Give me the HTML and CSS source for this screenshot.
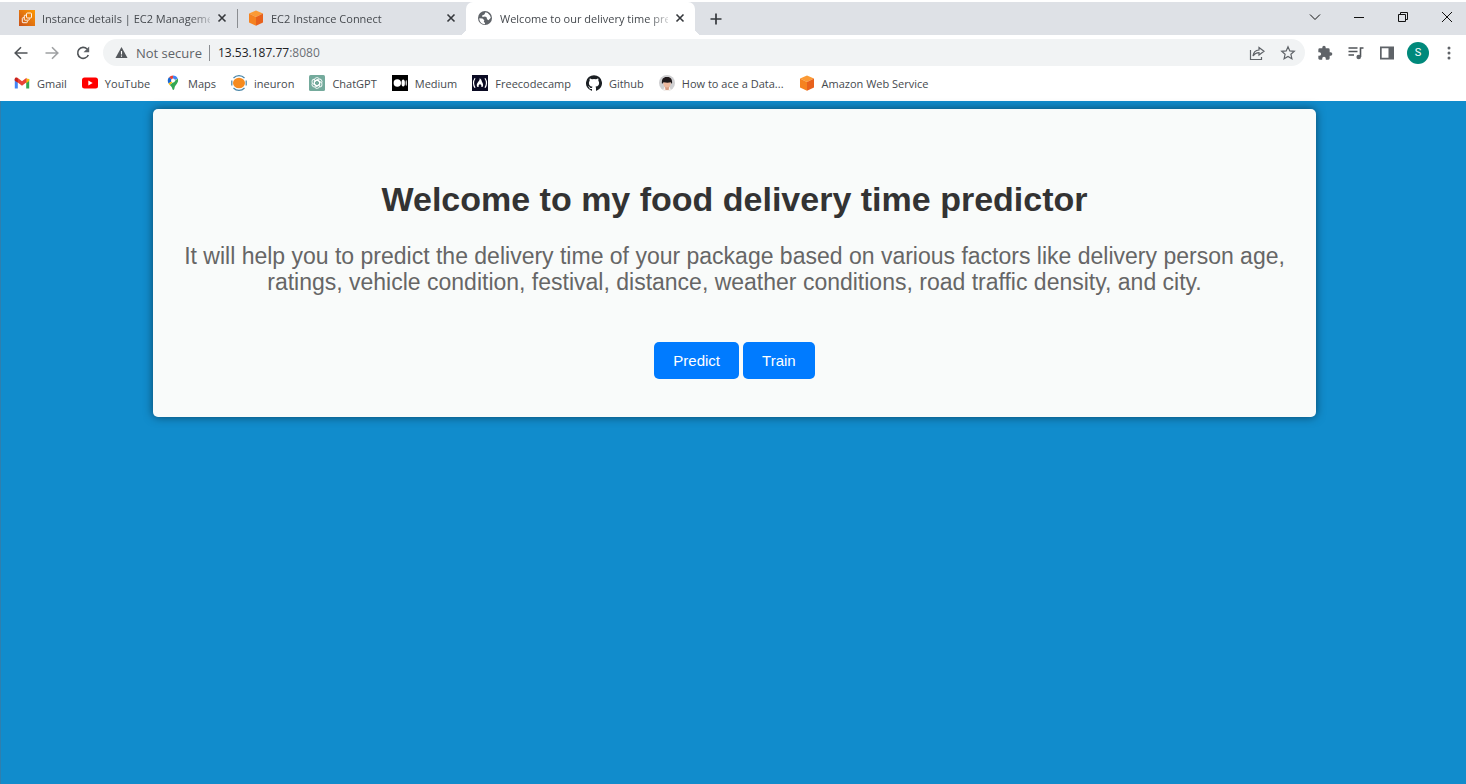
FILE: index.html
```html
<!DOCTYPE html>
<html lang="en">
<head>
<meta charset="utf-8">
<title>Welcome to our delivery time prediction</title>
<link rel="stylesheet" href="styles.css">
</head>
<body>
<svg class="defs" aria-hidden="true">
  <defs>
    <linearGradient id="orange" x1="0" y1="1" x2="1" y2="0"><stop offset="0" stop-color="#c8511b"/><stop offset="1" stop-color="#ff9900"/></linearGradient>
    <symbol id="close" viewBox="0 0 10 10"><path d="M1.5 1.5l7 7M8.500 1.500l-7 7" fill="none" stroke="#35383c" stroke-width="1.600"/></symbol>
    <symbol id="cube" viewBox="0 0 16 16"><path d="M8 0.500L15 3.500 8 7 1 3.500z" fill="#fb9a35"/><path d="M1 3.500L8 7v8.700L1 12.500z" fill="#f58220"/><path d="M15 3.500L8 7v8.700l7-3.200z" fill="#e8611c"/></symbol>
  </defs>
</svg>
<header class="browser">
  <div class="tabstrip">
    <div class="tab">
      <svg class="icon" viewBox="0 0 16 16"><rect width="16" height="16" fill="url(#orange)"/><g fill="none" stroke="#fff" stroke-width=".9"><rect x="7.500" y="3" width="5" height="5" rx="1"/><path d="M7 5.200H6a.7.700 0 0 0-.7.700V9.500a.7.700 0 0 0 .7.700h3.600a.7.700 0 0 0 .7-.7V8.500M5 7.700H4a.7.700 0 0 0-.7.700V12a.7.700 0 0 0 .7.700h3.600a.7.700 0 0 0 .7-.7v-1"/></g></svg>
      <span class="tab-title">Instance details | EC2 Manageme</span>
      <button class="tab-close" aria-label="Close tab"><svg><use href="#close"/></svg></button>
    </div>
    <div class="tab divided">
      <svg class="icon"><use href="#cube"/></svg>
      <span class="tab-title">EC2 Instance Connect</span>
      <button class="tab-close" aria-label="Close tab"><svg><use href="#close"/></svg></button>
    </div>
    <div class="tab active">
      <svg class="icon" viewBox="0 0 16 16"><circle cx="8" cy="8" r="7" fill="#5f6368"/><path d="M2.300 8.200l3.200.3 1.800 1.700-.5 1.500 1.200 1.200v1.300C4.500 14 2.200 11.500 2.300 8.200zM8.500 2.300l2.200.6 2.300 2.500.8 2.400-2.300 2.500-1.700-1.200.2-1.300-1.900-1.200-2.700.3-.3-1.500 2.200-.9z" fill="#fff"/></svg>
      <span class="tab-title">Welcome to our delivery time pre</span>
      <button class="tab-close" aria-label="Close tab"><svg><use href="#close"/></svg></button>
    </div>
    <button class="new-tab" aria-label="New tab"><svg viewBox="0 0 12 12"><path d="M6 .5v11M.5 6h11" stroke="#35383c" stroke-width="1.700"/></svg></button>
    <div class="window-controls">
      <button aria-label="Search tabs"><svg viewBox="0 0 12 12"><path d="M1 3.500l5 5 5-5"/></svg></button>
      <button aria-label="Minimize"><svg viewBox="0 0 12 12"><path d="M1 6.500h10"/></svg></button>
      <button aria-label="Restore"><svg viewBox="0 0 12 12"><path d="M1.500 3.500h7v7h-7zM3.500 3V1.500h7v7H9"/></svg></button>
      <button aria-label="Close window"><svg viewBox="0 0 12 12"><path d="M1 1l10 10M11 1L1 11"/></svg></button>
    </div>
  </div>
  <div class="toolbar">
    <button class="tool" aria-label="Back"><svg viewBox="0 0 16 16"><path class="line" d="M14.500 8H2.500M8 2.200L2.200 8 8 13.800"/></svg></button>
    <button class="tool dim" aria-label="Forward"><svg viewBox="0 0 16 16"><path class="line" d="M1.500 8h12M8 2.200L13.800 8 8 13.800"/></svg></button>
    <button class="tool" aria-label="Reload"><svg viewBox="0 0 16 16"><path class="line" d="M13.300 10a5.500 5.500 0 1 1-1.200-6"/><path d="M14.200 1.500v5.700H8.500z"/></svg></button>
    <div class="omnibox">
      <svg class="warn" viewBox="0 0 14 14"><path d="M7 1l6.500 12H.5z" fill="#55595d"/><path d="M6.400 5.500h1.200v3.700H6.400zM6.400 10.200h1.200v1.300H6.400z" fill="#fff"/></svg>
      <span class="security">Not secure</span>
      <span class="url">13.53.187.77<span class="port">:8080</span></span>
      <button class="tool" aria-label="Share"><svg viewBox="0 0 16 16"><path class="thin" d="M1.500 5v9.500h11V12M4 11c.5-4 2.600-5.800 6-6V2.500L15 6.300 10 10V7.700C7.500 7.700 5.500 8.800 4 11z"/></svg></button>
      <button class="tool" aria-label="Bookmark"><svg viewBox="0 0 16 16"><path class="thin" d="M8 1.800l1.800 4.100 4.500.4-3.400 3 1 4.400L8 11.400l-3.900 2.300 1-4.400-3.400-3 4.500-.4z"/></svg></button>
    </div>
    <button class="tool" aria-label="Extensions"><svg viewBox="0 0 24 24"><path d="M20.500 11H19V7a2 2 0 0 0-2-2h-4V3.500a2.500 2.500 0 0 0-5 0V5H4a2 2 0 0 0-2 2v3.800h1.500a2.700 2.700 0 0 1 0 5.400H2V20c0 1.100.9 2 2 2h3.800v-1.500a2.700 2.700 0 0 1 5.400 0V22H17a2 2 0 0 0 2-2v-4h1.500a2.500 2.500 0 0 0 0-5z"/></svg></button>
    <button class="tool" aria-label="Media"><svg viewBox="0 0 16 16"><path class="line" d="M.5 3h9M.5 6.500h9M.5 10H6M15.500 3h-3v9"/><circle cx="10.700" cy="12" r="2.300"/></svg></button>
    <button class="tool" aria-label="Side panel"><svg viewBox="0 0 16 16"><path fill-rule="evenodd" d="M1 1.500h14v13H1zM2.700 3.200v9.600h6.800V3.200z"/></svg></button>
    <button class="tool avatar" aria-label="Profile">S</button>
    <button class="tool" aria-label="Menu"><svg viewBox="0 0 16 16"><circle cx="8" cy="3" r="1.500"/><circle cx="8" cy="8" r="1.500"/><circle cx="8" cy="13" r="1.500"/></svg></button>
  </div>
  <nav class="bookmarks">
    <a href="#"><svg class="icon" viewBox="0 0 16 16"><path d="M.8 4v9.500h3V7z" fill="#4285f4"/><path d="M15.200 4v9.500h-3V7z" fill="#34a853"/><path d="M12.200 3.500L15.200 4v2l-3 2.300z" fill="#fbbc04"/><path d="M.8 4c0-1.600 1.600-2 2.700-1.200L8 6.300l4.500-3.500v4.500L8 10.700 3.800 7.500.8 5.500z" fill="#ea4335"/><path d="M.8 4.200c0-1.500 1.500-2 3-.8v4.200L.8 5.700z" fill="#c5221f"/></svg>Gmail</a>
    <a href="#"><svg class="icon" viewBox="0 0 16 16"><rect y="2.500" width="16" height="11" rx="2.500" fill="#f00"/><path d="M6.300 5.500v5L10.700 8z" fill="#fff"/></svg>YouTube</a>
    <a href="#"><svg class="icon" viewBox="0 0 16 16"><path d="M8 .5a5.300 5.300 0 0 0-4 1.800L8 6z" fill="#ea4335"/><path d="M8 .5a5.300 5.300 0 0 1 4.800 3L8 6z" fill="#4285f4"/><path d="M4 2.300C2.300 4.300 2.500 6.600 3.500 8.500L8 5.500z" fill="#1967d2"/><path d="M3.500 8.500l1.300 1.800L10.500 4z" fill="#fbbc04"/><path d="M12.800 3.500c1.500 4.500-2.800 6-3.300 9.500-.3 2.500-2 2.500-2.400 0-.3-1.200-1.300-2-2.300-3z" fill="#34a853"/><circle cx="8" cy="5.500" r="1.900" fill="#fff"/></svg>Maps</a>
    <a href="#"><svg class="icon" viewBox="0 0 16 16"><ellipse cx="8" cy="8" rx="6" ry="5.300" fill="#f68b1f"/><path d="M2.500 3C5.500-.2 10.500-.2 13.500 3M2.500 13c3 3.200 8 3.200 11 0M.8 5.500v5M15.200 5.500v5" fill="none" stroke="#4a86a8" stroke-width="1.200"/></svg>ineuron</a>
    <a href="#"><svg class="icon" viewBox="0 0 16 16"><rect width="16" height="16" rx="1.500" fill="#74aa9c"/><g fill="none" stroke="#fff" stroke-width=".9"><path id="petal" d="M5.400 9.500V5.200a2.600 2.600 0 0 1 4.800-1.400M5.400 6.500L8 5l3 1.700"/><use href="#petal" transform="rotate(60 8 8)"/><use href="#petal" transform="rotate(120 8 8)"/><use href="#petal" transform="rotate(180 8 8)"/><use href="#petal" transform="rotate(240 8 8)"/><use href="#petal" transform="rotate(300 8 8)"/></g></svg>ChatGPT</a>
    <a href="#"><svg class="icon" viewBox="0 0 16 16"><rect width="16" height="16" fill="#000"/><circle cx="5.300" cy="8" r="3.700" fill="#fff"/><ellipse cx="11.200" cy="8" rx="1.700" ry="3.500" fill="#fff"/><ellipse cx="14.200" cy="8" rx=".6" ry="3" fill="#fff"/></svg>Medium</a>
    <a href="#"><svg class="icon" viewBox="0 0 16 16"><rect width="16" height="16" fill="#0a0a23"/><path d="M3 3.200Q0 8 3 12.800M13 3.200q3 4.800 0 9.600" fill="none" stroke="#fff" stroke-width="1.200"/><path d="M7.600 3.200c1.900 1 2 2.500 2.600 4 .7 1.400 1.600 3 .3 4.800H9.300c.4-1.300-.2-2.400-1.300-2.700-1.100.3-1.700 1.400-1.300 2.700H5.500C3.800 9.700 5.500 8 6.500 6.500 7.300 5.400 7.800 4.500 7.600 3.200z" fill="#fff"/></svg>Freecodecamp</a>
    <a href="#"><svg class="icon" viewBox="0 0 16 16"><path fill="#1b1f23" d="M8 .2a8 8 0 0 0-2.530 15.590c.4.070.55-.17.550-.38l-.01-1.490c-2.230.48-2.700-.95-2.700-.95-.36-.92-.89-1.170-.89-1.170-.73-.5.060-.49.060-.49.800.06 1.230.83 1.230.83.710 1.220 1.870.87 2.330.66.070-.52.280-.87.510-1.070-1.780-.2-3.640-.89-3.640-3.950 0-.87.310-1.590.82-2.150-.08-.2-.36-1.020.08-2.120 0 0 .67-.21 2.200.82a7.600 7.600 0 0 1 4 0c1.530-1.040 2.200-.82 2.200-.82.440 1.100.160 1.920.080 2.120.51.560.82 1.270.82 2.150 0 3.070-1.870 3.750-3.650 3.950.290.250.540.730.540 1.480l-.01 2.200c0 .210.150.460.550.380A8 8 0 0 0 8 .2z"/></svg>Github</a>
    <a href="#"><svg class="icon" viewBox="0 0 16 16"><circle cx="8" cy="8" r="8" fill="#cfcfd1"/><path d="M4 15l1.500-3h5l1.500 3a8 8 0 0 1-8 0z" fill="#f7f2ee"/><path d="M5.700 10h4.600l-.6 5H6.500z" fill="#d99b80"/><ellipse cx="8" cy="8.500" rx="3.600" ry="4" fill="#edb99f"/><path d="M3 9C2.200 3.500 5 1.700 8 2c3.500-.2 5.700 2 5 7L11.700 7.200 8.500 7.700 4.500 7.200z" fill="#20191b"/></svg>How to ace a Data...</a>
    <a href="#"><svg class="icon"><use href="#cube"/></svg>Amazon Web Service</a>
  </nav>
</header>
<main class="page">
  <section class="card">
    <h1>Welcome to my food delivery time predictor</h1>
    <p>It will help you to predict the delivery time of your package based on various factors like delivery person age, ratings, vehicle condition, festival, distance, weather conditions, road traffic density, and city.</p>
    <div class="actions"><button>Predict</button><button>Train</button></div>
  </section>
</main>
</body>
</html>
```
FILE: styles.css
```css
* { box-sizing: border-box; }
body {
  margin: 0;
  min-height: 100vh;
  display: flex;
  flex-direction: column;
  font-family: "Open Sans", "Noto Sans", sans-serif;
  background: #fff;
}
button { border: 0; padding: 0; background: none; font: inherit; }
svg { display: block; }
.defs { position: absolute; width: 0; height: 0; }
.icon { width: 16px; height: 16px; flex: none; }

.browser { padding-top: 2px; color: #45494e; font-size: 11px; }
.tabstrip {
  display: flex;
  align-items: stretch;
  height: 33px;
  padding-left: 8px;
  background: #dee1e6;
}
.tab {
  position: relative;
  display: flex;
  align-items: center;
  gap: 7px;
  width: 229px;
  padding: 0 10px 1px 11px;
}
.tab.divided::before {
  content: "";
  position: absolute;
  left: 0;
  top: 7px;
  height: 19px;
  width: 1px;
  background: #8a8d91;
}
.tab.active { background: #fff; border-radius: 7px 7px 0 0; }
.tab.active::before, .tab.active::after {
  content: "";
  position: absolute;
  bottom: 0;
  width: 7px;
  height: 7px;
}
.tab.active::before { right: 100%; background: radial-gradient(circle at 0 0, transparent 7px, #fff 7px); }
.tab.active::after { left: 100%; background: radial-gradient(circle at 100% 0, transparent 7px, #fff 7px); }
.tab-title {
  flex: 1;
  min-width: 0;
  white-space: nowrap;
  mask-image: linear-gradient(to right, #000 88%, transparent 104%);
}
.tab-close svg { width: 10px; height: 10px; }
.new-tab { margin-left: 15px; }
.new-tab svg { width: 12px; height: 12px; }
.window-controls { display: flex; gap: 6px; margin-left: auto; padding-bottom: 4px; }
.window-controls button { width: 38px; display: grid; place-items: center; }
.window-controls svg { width: 12px; height: 12px; fill: none; stroke: #111; }

.toolbar {
  display: flex;
  align-items: center;
  gap: 9px;
  height: 35px;
  padding: 0 6px 0 10px;
}
.tool { width: 22px; height: 22px; display: grid; place-items: center; flex: none; }
.tool svg { width: 16px; height: 16px; fill: #5f6368; }
.tool .line { fill: none; stroke: #505458; stroke-width: 1.6; }
.tool .thin { fill: none; stroke: #5f6368; stroke-width: 1.2; }
.tool.dim { opacity: .55; }
.tool.avatar {
  border-radius: 50%;
  background: #00897b;
  color: #fff;
  font: 11px Roboto, sans-serif;
}
.omnibox {
  flex: 1;
  display: flex;
  align-items: center;
  gap: 8px;
  height: 27px;
  padding: 0 6px 0 12px;
  border-radius: 14px;
  background: #f1f3f4;
  font-size: 13px;
}
.omnibox .tool + .tool { margin-left: 1px; }
.warn { width: 13px; height: 13px; }
.security { padding-right: 7px; border-right: 1px solid #8a8d91; line-height: 16px; color: #5f6368; }
.url { flex: 1; color: #202124; font-size: 12px; }
.port { color: #6b6f74; }

.bookmarks { display: flex; align-items: center; gap: 15px; height: 31px; padding: 0 14px 5px; }
.bookmarks a {
  display: flex;
  align-items: center;
  gap: 7px;
  color: #45494e;
  text-decoration: none;
  white-space: nowrap;
}

.page {
  flex: 1;
  padding: 8px 150px 8px 152px;
  border-left: 1px solid #2f7fae;
  background: #118ccc;
  font-family: "Liberation Sans", Arial, sans-serif;
}
.card {
  padding: 70px 28px 38px;
  border-radius: 5px;
  background: #f9fbfa;
  box-shadow: 0 0 10px rgba(0, 0, 0, .5);
  text-align: center;
}
h1 { margin: 0 0 23px; font-size: 34px; line-height: 41px; color: #333; }
p { margin: 0 0 47px; font-size: 23px; line-height: 26px; color: #666; }
.actions { display: flex; justify-content: center; gap: 4px; }
.actions button {
  height: 37px;
  padding: 0 19px;
  border-radius: 5px;
  background: #007bff;
  color: #fff;
  font-size: 15px;
}
```
